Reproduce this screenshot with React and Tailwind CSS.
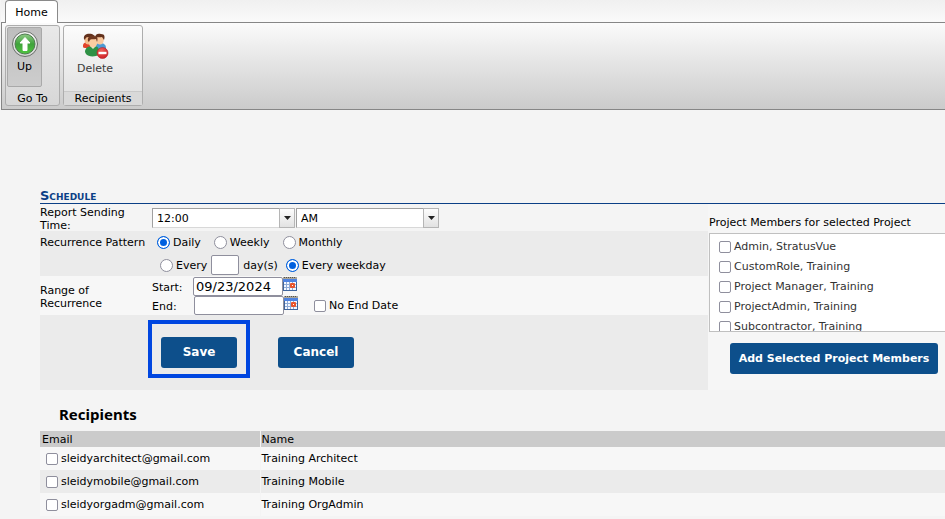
import React from "react";

const members = [
  "Admin, StratusVue",
  "CustomRole, Training",
  "Project Manager, Training",
  "ProjectAdmin, Training",
  "Subcontractor, Training",
];

const recipients = [
  ["sleidyarchitect@gmail.com", "Training Architect"],
  ["sleidymobile@gmail.com", "Training Mobile"],
  ["sleidyorgadm@gmail.com", "Training OrgAdmin"],
];

function Check({ label, className = "" }) {
  return (
    <label className={"flex items-center gap-[3px] whitespace-nowrap " + className}>
      <input
        type="checkbox"
        className="h-3 w-3 shrink-0 appearance-none rounded-xs border border-[#8f8f9d] bg-white checked:bg-[#0060df]"
      />
      {label}
    </label>
  );
}

function Radio({ name, label, defaultChecked }) {
  return (
    <label className="flex items-center gap-[3px] whitespace-nowrap">
      <input
        type="radio"
        name={name}
        defaultChecked={defaultChecked}
        className="h-[13px] w-[13px] shrink-0 appearance-none rounded-full border border-[#8f8f9d] bg-white checked:border-[#0060df] checked:bg-[#0060df] checked:shadow-[inset_0_0_0_2px_#fff]"
      />
      {label}
    </label>
  );
}

function Combo({ label, options }) {
  return (
    <div className="relative h-5 w-[143px]">
      <select
        aria-label={label}
        className="h-5 w-full appearance-none rounded-none border border-t-[#a0a0a0] border-r-[#b8b8b8] border-b-[#d8d8d8] border-l-[#a0a0a0] bg-white pt-px pl-1 text-[11px] leading-4"
      >
        {options.map((o) => (
          <option key={o}>{o}</option>
        ))}
      </select>
      <span className="pointer-events-none absolute top-0 right-0 flex h-5 w-4 items-center justify-center border border-[#b5b5b5] bg-linear-to-b from-[#fdfdfd] to-[#e2e2e2]">
        <svg width="7" height="4" viewBox="0 0 7 4" aria-hidden="true">
          <path d="M0 0H7L3.5 4Z" fill="#222" />
        </svg>
      </span>
    </div>
  );
}

function CalendarIcon() {
  return (
    <svg width="14" height="14" viewBox="0 0 14 14" aria-hidden="true">
      <rect width="14" height="14" fill="#3f659c" />
      <rect width="14" height="2" fill="#a9a69c" />
      <path d="M1 0.5H13" stroke="#55534d" strokeDasharray="1 1" />
      <rect y="2" width="14" height="3" fill="#4f83e0" />
      <rect x="1" y="5" width="12" height="8" fill="#f4f8ff" />
      <path d="M3.5 5V13M6.5 5V13M9.5 5V13M1 7.5H13M1 10.5H13" stroke="#8fabd6" />
      <rect x="7" y="6" width="5" height="5" rx="1" fill="#e8552d" />
      <rect x="9" y="8" width="1" height="1" fill="#fff" />
    </svg>
  );
}

function UpIcon() {
  return (
    <svg width="28" height="28" viewBox="0 0 28 28" aria-hidden="true">
      <defs>
        <linearGradient id="upFill" x1="0" y1="0" x2="0" y2="1">
          <stop offset="0" stopColor="#8fca86" />
          <stop offset="0.5" stopColor="#3fa33b" />
          <stop offset="1" stopColor="#4fc63f" />
        </linearGradient>
        <linearGradient id="upRing" x1="0" y1="0" x2="0" y2="1">
          <stop offset="0" stopColor="#f5f5f5" />
          <stop offset="1" stopColor="#d2d5d2" />
        </linearGradient>
      </defs>
      <circle cx="14" cy="14" r="12.5" fill="url(#upRing)" stroke="#6b706b" />
      <circle cx="14" cy="14" r="10" fill="url(#upFill)" stroke="#4f7a50" />
      <path d="M14 7.5L19 13H16V20.5H12V13H9Z" fill="#fff" stroke="#fff" strokeLinejoin="round" />
    </svg>
  );
}

function PeopleDeleteIcon() {
  return (
    <svg width="28" height="28" viewBox="0 0 28 28" aria-hidden="true">
      <defs>
        <radialGradient id="redDot" cx="0.4" cy="0.3" r="0.8">
          <stop offset="0" stopColor="#f0625a" />
          <stop offset="1" stopColor="#c91820" />
        </radialGradient>
      </defs>
      <path d="M2 13C2 10 4 9 7 9L12 12V15H4C2 15 2 14 2 13Z" fill="#e2432b" />
      <ellipse cx="7.5" cy="7" rx="4" ry="4.5" fill="#f4bd8d" />
      <path d="M3 6C2 1 7 0 11 1L14 3L11 5C8 4 5 3 4 7Z" fill="#63311c" />
      <path d="M14 13C15 10 17 10 19 10C23 10 25 12 25 15V18H14Z" fill="#4d9bd3" />
      <ellipse cx="19" cy="7" rx="3.8" ry="4.6" fill="#f9c99f" />
      <path d="M14 5C14 1 17 0 20 1C24 1 24 4 23 7L21 4C18 5 16 3 15 6Z" fill="#63311c" />
      <path d="M4 19C4 15 7 13 12 13C17 13 18 15 18 19V22C14 24 7 24 5 21Z" fill="#2f9145" />
      <path d="M9 13L12 16L15 13Z" fill="#d9ecd2" />
      <ellipse cx="12" cy="9.5" rx="4.2" ry="5" fill="#fbcda2" />
      <path d="M7 8C6 3 10 2 13 3C17 3 17 6 16 9L15 6C12 7 9 5 8 9Z" fill="#6f3820" />
      <circle cx="21.5" cy="20" r="5.5" fill="url(#redDot)" stroke="#b3202a" strokeWidth="0.6" />
      <rect x="17.5" y="18.8" width="8" height="2.4" fill="#fff" />
    </svg>
  );
}

const buttonClass = "h-[31px] rounded-[3px] bg-[#0d4f8b] font-bold text-white whitespace-nowrap";

export default function App() {
  return (
    <div className="min-h-screen overflow-x-hidden bg-[#f4f4f4] pl-px font-['Verdana','DejaVu_Sans',sans-serif] text-[11px] leading-[13px] text-black">
      <header>
        <nav className="flex h-[22px] items-end bg-linear-to-b from-[#f0f0f0] to-[#fafafa] pl-1">
          <button className="z-10 -mb-px h-[23px] w-[53px] rounded-t border border-b-0 border-[#8a8a8a] bg-white">
            Home
          </button>
        </nav>
        <div className="flex h-[88px] gap-[3px] border border-r-0 border-[#868686] bg-linear-to-b from-[#fbfbfb] to-[#cbcbcb] px-[3px] pt-[2px] pb-[3px]">
          <section className="flex w-[55px] flex-col rounded-[3px] border border-[#adadad] bg-linear-to-b from-[#e9e9e9] to-[#d7d7d7]">
            <div className="flex-1 pt-px pl-px">
              <button className="flex h-[60px] w-[35px] flex-col items-center rounded-xs border border-[#a9a9a9] bg-linear-to-b from-[#bebebe] to-[#cdcdcd] pt-[2px]">
                <UpIcon />
                <span className="pt-[2px]">Up</span>
              </button>
            </div>
            <h2 className="text-center">Go To</h2>
          </section>
          <section className="flex w-20 flex-col rounded-[3px] border border-[#adadad] bg-linear-to-b from-[#fcfcfc] to-[#dedede]">
            <div className="flex-1 pl-[10px]">
              <button className="flex w-[42px] flex-col items-center pt-[7px] text-[#3c3c3c]">
                <PeopleDeleteIcon />
                <span className="pt-px">Delete</span>
              </button>
            </div>
            <h2 className="border-t border-[#c9c9c9] bg-[#d9d9d9] text-center">Recipients</h2>
          </section>
        </div>
      </header>

      <main className="pt-[79px] pl-[39px]">
        <h1 className="border-b border-[#0b3f86] text-[13px] leading-[14px] font-bold text-[#0b3f86] [font-variant:small-caps]">
          Schedule
        </h1>
        <form className="flex" onSubmit={(e) => e.preventDefault()}>
          <div className="w-[668px] shrink">
            <div className="flex h-[27px]">
              <div className="w-28 shrink-0 pt-[2px]">
                Report Sending
                <br />
                Time:
              </div>
              <div className="flex gap-px pt-1">
                <Combo label="Report sending time" options={["12:00", "12:30", "1:00"]} />
                <Combo label="AM or PM" options={["AM", "PM"]} />
              </div>
            </div>
            <div className="flex h-[45px] bg-[#ebebeb]">
              <div className="w-[117px] shrink-0 pt-[5px] whitespace-nowrap">Recurrence Pattern</div>
              <div className="pt-[5px]">
                <div className="flex gap-[13px]">
                  <Radio name="pattern" label="Daily" defaultChecked />
                  <Radio name="pattern" label="Weekly" />
                  <Radio name="pattern" label="Monthly" />
                </div>
                <div className="flex items-center gap-1 pt-[6px] pl-[3px]">
                  <Radio name="daily" label="Every" />
                  <input
                    aria-label="Number of days"
                    className="h-5 w-7 rounded-xs border border-[#8f8f9d] bg-white px-1"
                  />
                  <span className="pr-1">day(s)</span>
                  <Radio name="daily" label="Every weekday" defaultChecked />
                </div>
              </div>
            </div>
            <div className="flex h-[39px] bg-[#f7f7f7]">
              <div className="w-28 shrink-0 pt-2">
                Range of
                <br />
                Recurrence
              </div>
              <div className="pt-px">
                <div className="flex h-[19px] items-start">
                  <label htmlFor="start" className="w-[41px] pt-1">
                    Start:
                  </label>
                  <input
                    id="start"
                    defaultValue="09/23/2024"
                    className="h-[19px] w-[90px] rounded-xs border border-[#8f8f9d] bg-white px-[2px] text-[13px]"
                  />
                  <button aria-label="Pick start date">
                    <CalendarIcon />
                  </button>
                </div>
                <div className="flex h-[19px] items-start">
                  <label htmlFor="end" className="w-[42px] pt-1">
                    End:
                  </label>
                  <input
                    id="end"
                    className="h-[19px] w-[90px] rounded-xs border border-[#8f8f9d] bg-white px-[2px] text-[13px]"
                  />
                  <button aria-label="Pick end date">
                    <CalendarIcon />
                  </button>
                  <Check label="No End Date" className="pt-[3px] pl-4" />
                </div>
              </div>
            </div>
            <div className="flex h-[75px] gap-7 bg-[#ebebeb] pt-[5px] pl-[108px]">
              <div className="h-[58px] w-[102px] border-4 border-[#0046e0] px-[9px] py-[13px]">
                <button className={buttonClass + " w-[76px] text-[12px]"}>Save</button>
              </div>
              <button className={buttonClass + " mt-[17px] w-[76px] text-[12px]"}>Cancel</button>
            </div>
          </div>

          <div className="min-w-[236px] flex-1 bg-[#f6f6f6] pt-3 pl-px">
            <h2 className="whitespace-nowrap">Project Members for selected Project</h2>
            <div className="mt-1 flex h-[99px] flex-col gap-[7px] overflow-hidden border border-r-0 border-[#c0c0c0] bg-white pt-[6px] pl-[9px] text-[#333]">
              {members.map((m) => (
                <Check key={m} label={m} className="h-[13px] shrink-0" />
              ))}
            </div>
            <button className={buttonClass + " mt-[11px] ml-[21px] w-52 text-[11px]"}>
              Add Selected Project Members
            </button>
          </div>
        </form>

        <h2 className="pt-4 pb-2 pl-[19px] font-['Noto_Sans',sans-serif] text-[15px] leading-[17px] font-bold">
          Recipients
        </h2>
        <table className="w-full border-collapse text-left">
          <thead>
            <tr className="h-4 bg-[#cbcbcb]">
              <th className="w-[220px] border-r border-[#f4f4f4] pl-[2px] font-normal">Email</th>
              <th className="pl-px font-normal">Name</th>
            </tr>
          </thead>
          <tbody>
            {recipients.map(([email, name]) => (
              <tr key={email} className="h-[23px] odd:bg-[#f7f7f7] even:bg-[#ebebeb]">
                <td className="border-r border-[#f4f4f4] pl-[6px]">
                  <Check label={email} />
                </td>
                <td className="pl-px">{name}</td>
              </tr>
            ))}
          </tbody>
        </table>
      </main>
    </div>
  );
}
